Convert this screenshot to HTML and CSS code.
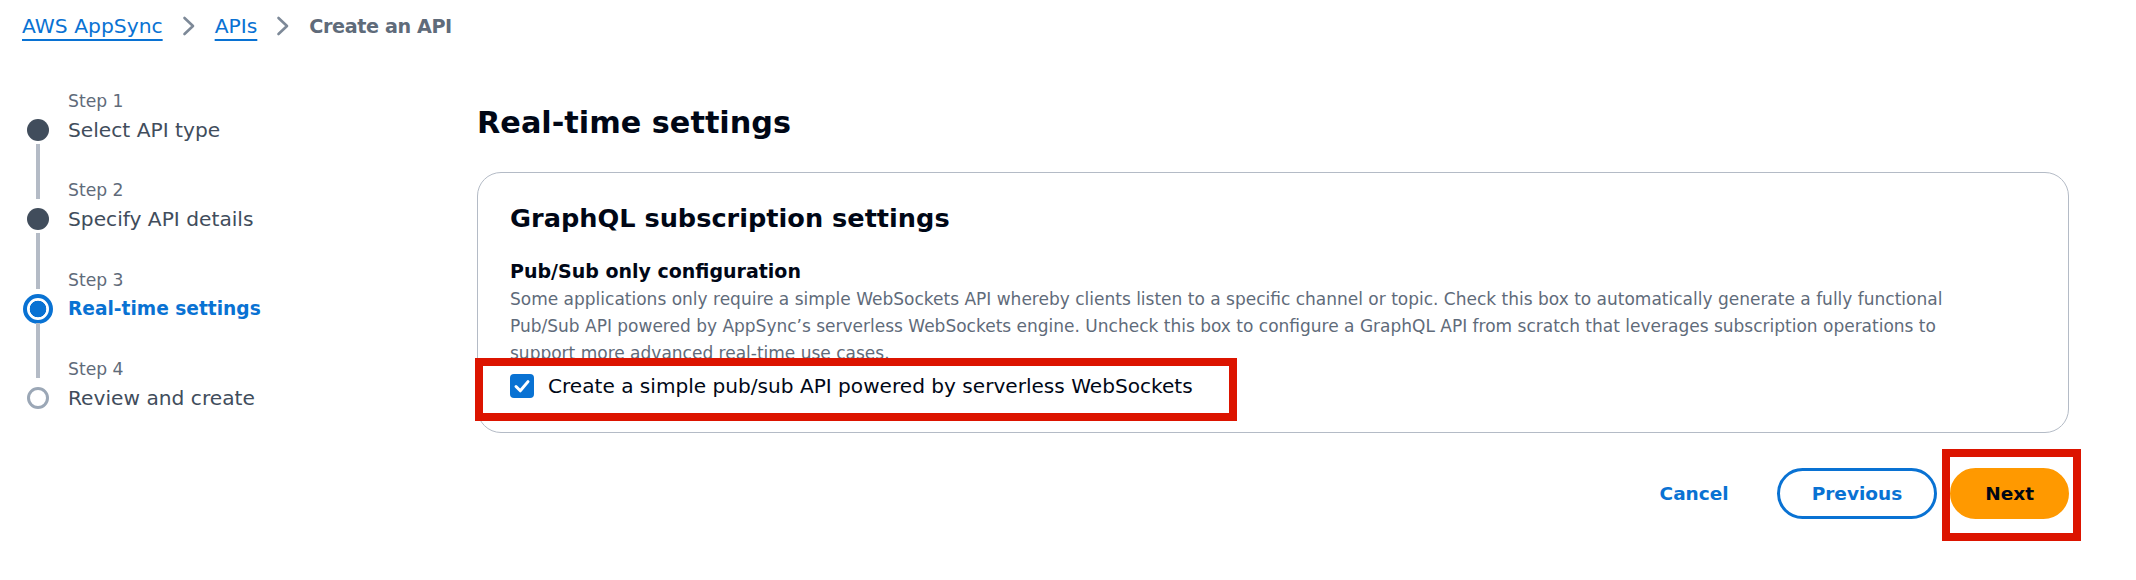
FILE: index.html
```html
<!DOCTYPE html>
<html lang="en">
<head>
<meta charset="utf-8">
<title>Create an API - AWS AppSync</title>
<link rel="stylesheet" href="styles.css">
</head>
<body>
<nav class="breadcrumbs">
  <a class="crumb-link" href="#">AWS AppSync</a>
  <span class="crumb-sep"><svg width="14" height="22" viewBox="0 0 14 22"><polyline points="2.5,3 11,11 2.5,19" fill="none" stroke="#7d8998" stroke-width="2.6" stroke-linecap="round" stroke-linejoin="round"/></svg></span>
  <a class="crumb-link" href="#">APIs</a>
  <span class="crumb-sep"><svg width="14" height="22" viewBox="0 0 14 22"><polyline points="2.5,3 11,11 2.5,19" fill="none" stroke="#7d8998" stroke-width="2.6" stroke-linecap="round" stroke-linejoin="round"/></svg></span>
  <span class="crumb-current">Create an API</span>
</nav>

<div class="layout">
  <aside class="wizard-nav">
    <ol class="steps">
      <li class="step step-first">
        <span class="rail"></span>
        <span class="step-label">Step 1</span>
        <span class="dot dot-done"></span>
        <span class="step-title">Select API type</span>
      </li>
      <li class="step">
        <span class="rail"></span>
        <span class="step-label">Step 2</span>
        <span class="dot dot-done"></span>
        <span class="step-title">Specify API details</span>
      </li>
      <li class="step">
        <span class="rail"></span>
        <span class="step-label">Step 3</span>
        <span class="dot dot-active"></span>
        <span class="step-title step-title-active">Real-time settings</span>
      </li>
      <li class="step">
        <span class="rail"></span>
        <span class="step-label">Step 4</span>
        <span class="dot dot-todo"></span>
        <span class="step-title">Review and create</span>
      </li>
    </ol>
  </aside>

  <main class="main">
    <h1 class="page-title">Real-time settings</h1>
    <section class="container">
      <h2 class="container-title">GraphQL subscription settings</h2>
      <h3 class="field-label">Pub/Sub only configuration</h3>
      <p class="field-desc">Some applications only require a simple WebSockets API whereby clients listen to a specific channel or topic. Check this box to automatically generate a fully functional<br>Pub/Sub API powered by AppSync’s serverless WebSockets engine. Uncheck this box to configure a GraphQL API from scratch that leverages subscription operations to<br>support more advanced real-time use cases.</p>
      <label class="checkbox-row">
        <svg class="checkbox" width="24" height="24" viewBox="0 0 24 24"><rect x="0" y="0" width="24" height="24" rx="4" fill="#0972d3"/><polyline points="6,12.5 10.3,16.8 18,7.6" fill="none" stroke="#fff" stroke-width="3" stroke-linecap="round" stroke-linejoin="round"/></svg>
        <span class="checkbox-text">Create a simple pub/sub API powered by serverless WebSockets</span>
        <span class="highlight highlight-checkbox"></span>
      </label>
    </section>
    <div class="actions">
      <button class="btn btn-link" type="button">Cancel</button>
      <button class="btn btn-normal" type="button">Previous</button>
      <span class="btn-wrap">
        <button class="btn btn-primary" type="button">Next</button>
        <span class="highlight highlight-next"></span>
      </span>
    </div>
  </main>
</div>
</body>
</html>
```

FILE: styles.css
```css
* { box-sizing: border-box; }

html, body {
  min-height: 580px;
}

body {
  margin: 0;
  background: #ffffff;
  font-family: "DejaVu Sans", "Open Sans", sans-serif;
  color: #000716;
}

/* Breadcrumbs */
.breadcrumbs {
  display: flex;
  align-items: center;
  height: 52px;
  padding-left: 22px;
  font-size: 20.3px;
}
.crumb-link {
  color: #0972d3;
  text-decoration: underline;
  text-decoration-thickness: 2px;
  text-underline-offset: 6px;
}
.crumb-sep {
  width: 52px;
  display: flex;
  justify-content: center;
  align-items: center;
}
.crumb-current {
  color: #5f6b7a;
  font-weight: 700;
  font-size: 19.2px;
  letter-spacing: -0.4px;
}

/* Layout */
.layout {
  display: flex;
  padding-bottom: 50px;
}
.wizard-nav {
  width: 477px;
  flex: none;
  padding: 3px 0 0 23px;
}
.main {
  flex: 1;
  padding-right: 67px;
}

/* Steps */
.steps {
  list-style: none;
  margin: 0;
  padding: 0;
}
.step {
  display: grid;
  grid-template-columns: 30px 1fr;
  grid-template-rows: 59.5px 30px;
  column-gap: 15px;
}
.rail {
  grid-column: 1;
  grid-row: 1;
  justify-self: center;
  width: 4px;
  margin: -1px 0 5px;
  background: #b4bbc6;
}
.step-first .rail { visibility: hidden; }
.step-label {
  grid-column: 2;
  grid-row: 1;
  align-self: end;
  margin-bottom: 1px;
  font-size: 17.2px;
  line-height: 26px;
  color: #5f6b7a;
}
.dot {
  grid-column: 1;
  grid-row: 2;
  align-self: center;
  justify-self: center;
  border-radius: 50%;
}
.dot-done {
  width: 22px;
  height: 22px;
  background: #414d5c;
}
.dot-active {
  width: 30px;
  height: 30px;
  border: 4px solid #0972d3;
  background: radial-gradient(circle, #0972d3 0 8px, #ffffff 8.6px);
}
.dot-todo {
  width: 22px;
  height: 22px;
  border: 3.5px solid #9ba7b6;
  background: #fff;
}
.step-title {
  grid-column: 2;
  grid-row: 2;
  align-self: center;
  font-size: 20.2px;
  line-height: 30px;
  color: #414d5c;
}
.step-title-active {
  color: #0972d3;
  font-weight: 700;
  font-size: 18.6px;
}

/* Main content */
.page-title {
  margin: 51px 0 29px;
  font-size: 30.3px;
  line-height: 40px;
  font-weight: 700;
  color: #000716;
}
.container {
  border: 1px solid #b4bbc6;
  border-radius: 24px;
  padding: 27px 32px 31px;
}
.container-title {
  margin: 0;
  font-size: 25.6px;
  line-height: 36px;
  font-weight: 700;
  color: #000716;
}
.field-label {
  margin: 21px 0 0;
  font-size: 19px;
  line-height: 28px;
  font-weight: 700;
  color: #000716;
}
.field-desc {
  margin: 0;
  padding-top: 1px;
  font-size: 17px;
  line-height: 27px;
  color: #5f6b7a;
  white-space: nowrap;
}
.checkbox-row {
  position: relative;
  display: flex;
  align-items: center;
  gap: 14px;
  height: 30px;
  margin-top: 4px;
}
.checkbox { flex: none; }
.checkbox-text {
  font-size: 20.1px;
  line-height: 30px;
  color: #000716;
}

/* Annotation overlays */
.highlight {
  position: absolute;
  border: 8px solid #dc1400;
  pointer-events: none;
  z-index: 2;
}
.highlight-checkbox {
  top: -13px;
  left: -35px;
  width: 762px;
  height: 63px;
}
.btn-wrap {
  position: relative;
  display: flex;
}
.highlight-next {
  top: -19px;
  left: -8px;
  width: 139px;
  height: 92px;
}

/* Actions */
.actions {
  display: flex;
  justify-content: flex-end;
  gap: 13px;
  margin-top: 35px;
}
.btn {
  height: 51px;
  padding: 0 32px;
  border: 3px solid transparent;
  border-radius: 26px;
  background: transparent;
  font-family: "DejaVu Sans", "Open Sans", sans-serif;
  font-size: 18.5px;
  font-weight: 700;
  line-height: 45px;
  cursor: pointer;
}
.btn-link { color: #0972d3; }
.btn-normal {
  color: #0972d3;
  border-color: #0972d3;
  background: #fff;
}
.btn-primary {
  color: #000716;
  background: #ff9900;
  border-color: #ff9900;
}
```
